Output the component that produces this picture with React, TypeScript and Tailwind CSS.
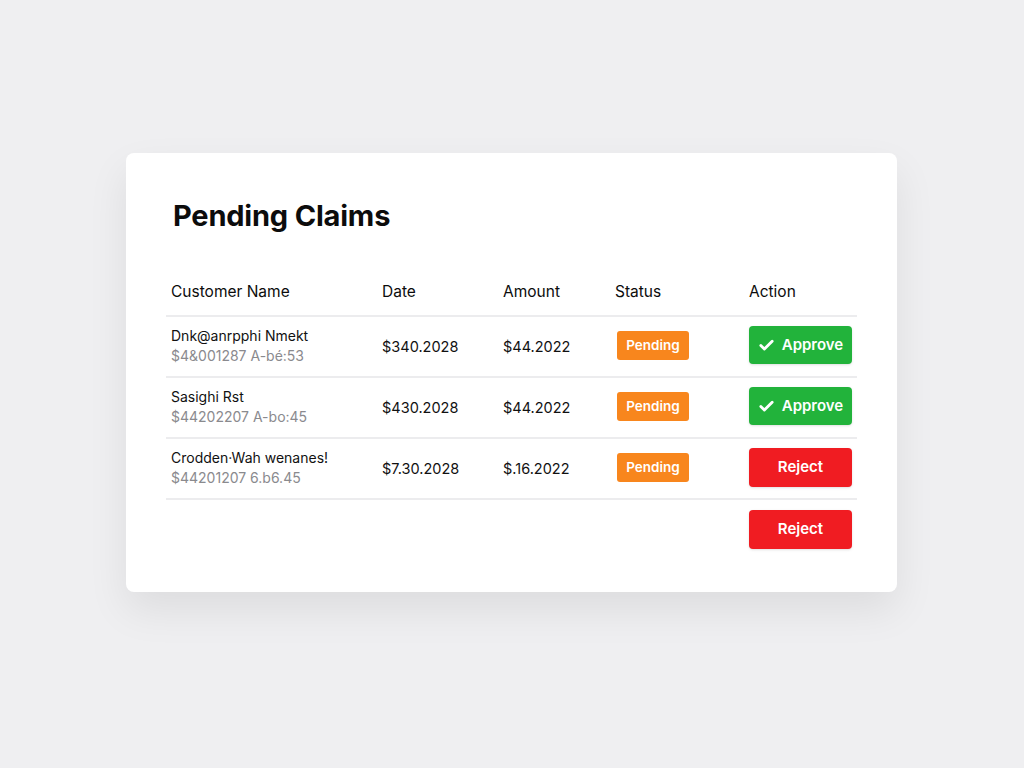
import { Check } from 'lucide-react';

interface Claim {
  name: string;
  sub: string;
  date: string;
  amount: string;
  action: 'approve' | 'reject';
}

const claims: Claim[] = [
  { name: 'Dnk@anrpphi Nmekt', sub: '$4&001287 A-bé:53', date: '$340.2028', amount: '$44.2022', action: 'approve' },
  { name: 'Sasighi Rst', sub: '$44202207 A-bo:45', date: '$430.2028', amount: '$44.2022', action: 'approve' },
  { name: 'Crodden·Wah wenanes!', sub: '$44201207 6.b6.45', date: '$7.30.2028', amount: '$.16.2022', action: 'reject' },
];

const cols = 'grid grid-cols-[211px_121px_112px_134px_112px]';

function ActionButton({ kind }: { kind: 'approve' | 'reject' }) {
  if (kind === 'approve') {
    return (
      <button className="w-[103px] h-[38px] rounded-[4px] bg-[#22b33b] text-white text-[15px] font-semibold flex items-center justify-center gap-[7px] shadow-sm">
        <Check size={17} strokeWidth={4} />
        Approve
      </button>
    );
  }
  return (
    <button className="w-[103px] h-[39px] rounded-[4px] bg-[#f01c22] text-white text-[15px] font-semibold flex items-center justify-center shadow-sm">
      Reject
    </button>
  );
}

export default function App() {
  return (
    <div className="min-h-screen bg-[#efeff1] flex justify-center pt-[153px] pr-px font-['Inter',sans-serif] text-[#111]">
      <div className="w-[771px] h-[439px] bg-white rounded-[8px] shadow-[0_18px_40px_rgba(0,0,0,0.08)] px-10 pt-[45px]">
        <h1 className="pl-[7px] text-[29px] leading-9 font-bold tracking-[-0.2px] text-[#0c0c0c]">Pending Claims</h1>

        {/* Table */}
        <div className="mt-[34px]">
          <div className={`${cols} h-[49px] items-center border-b-2 border-[#ececee] text-[15.5px] text-[#0c0c0c]`}>
            <div className="px-[5px]">Customer Name</div>
            <div className="px-[5px]">Date</div>
            <div className="px-[5px]">Amount</div>
            <div className="px-[5px]">Status</div>
            <div className="px-[5px]">Action</div>
          </div>

          {claims.map((c) => (
            <div key={c.name} className={`${cols} h-[61px] items-center border-b-2 border-[#ececee]`}>
              <div className="px-[5px] leading-5 -mt-[2px]">
                <div className="text-[14px] text-[#111]">{c.name}</div>
                <div className="text-[14px] text-[#8a8a8e]">{c.sub}</div>
              </div>
              <div className="px-[5px] text-[14.5px]">{c.date}</div>
              <div className="px-[5px] text-[14.5px]">{c.amount}</div>
              <div className="px-[7px] -mt-[2px]">
                <span className="inline-flex items-center justify-center w-[72px] h-[29px] rounded-[3px] bg-[#f8861d] text-white text-[13.5px] font-semibold">
                  Pending
                </span>
              </div>
              <div className="px-[5px] -mt-[3px]">
                <ActionButton kind={c.action} />
              </div>
            </div>
          ))}

          <div className={`${cols} h-[60px] items-center`}>
            <div />
            <div />
            <div />
            <div />
            <div className="px-[5px] -mt-[2px]">
              <ActionButton kind="reject" />
            </div>
          </div>
        </div>
      </div>
    </div>
  );
}
